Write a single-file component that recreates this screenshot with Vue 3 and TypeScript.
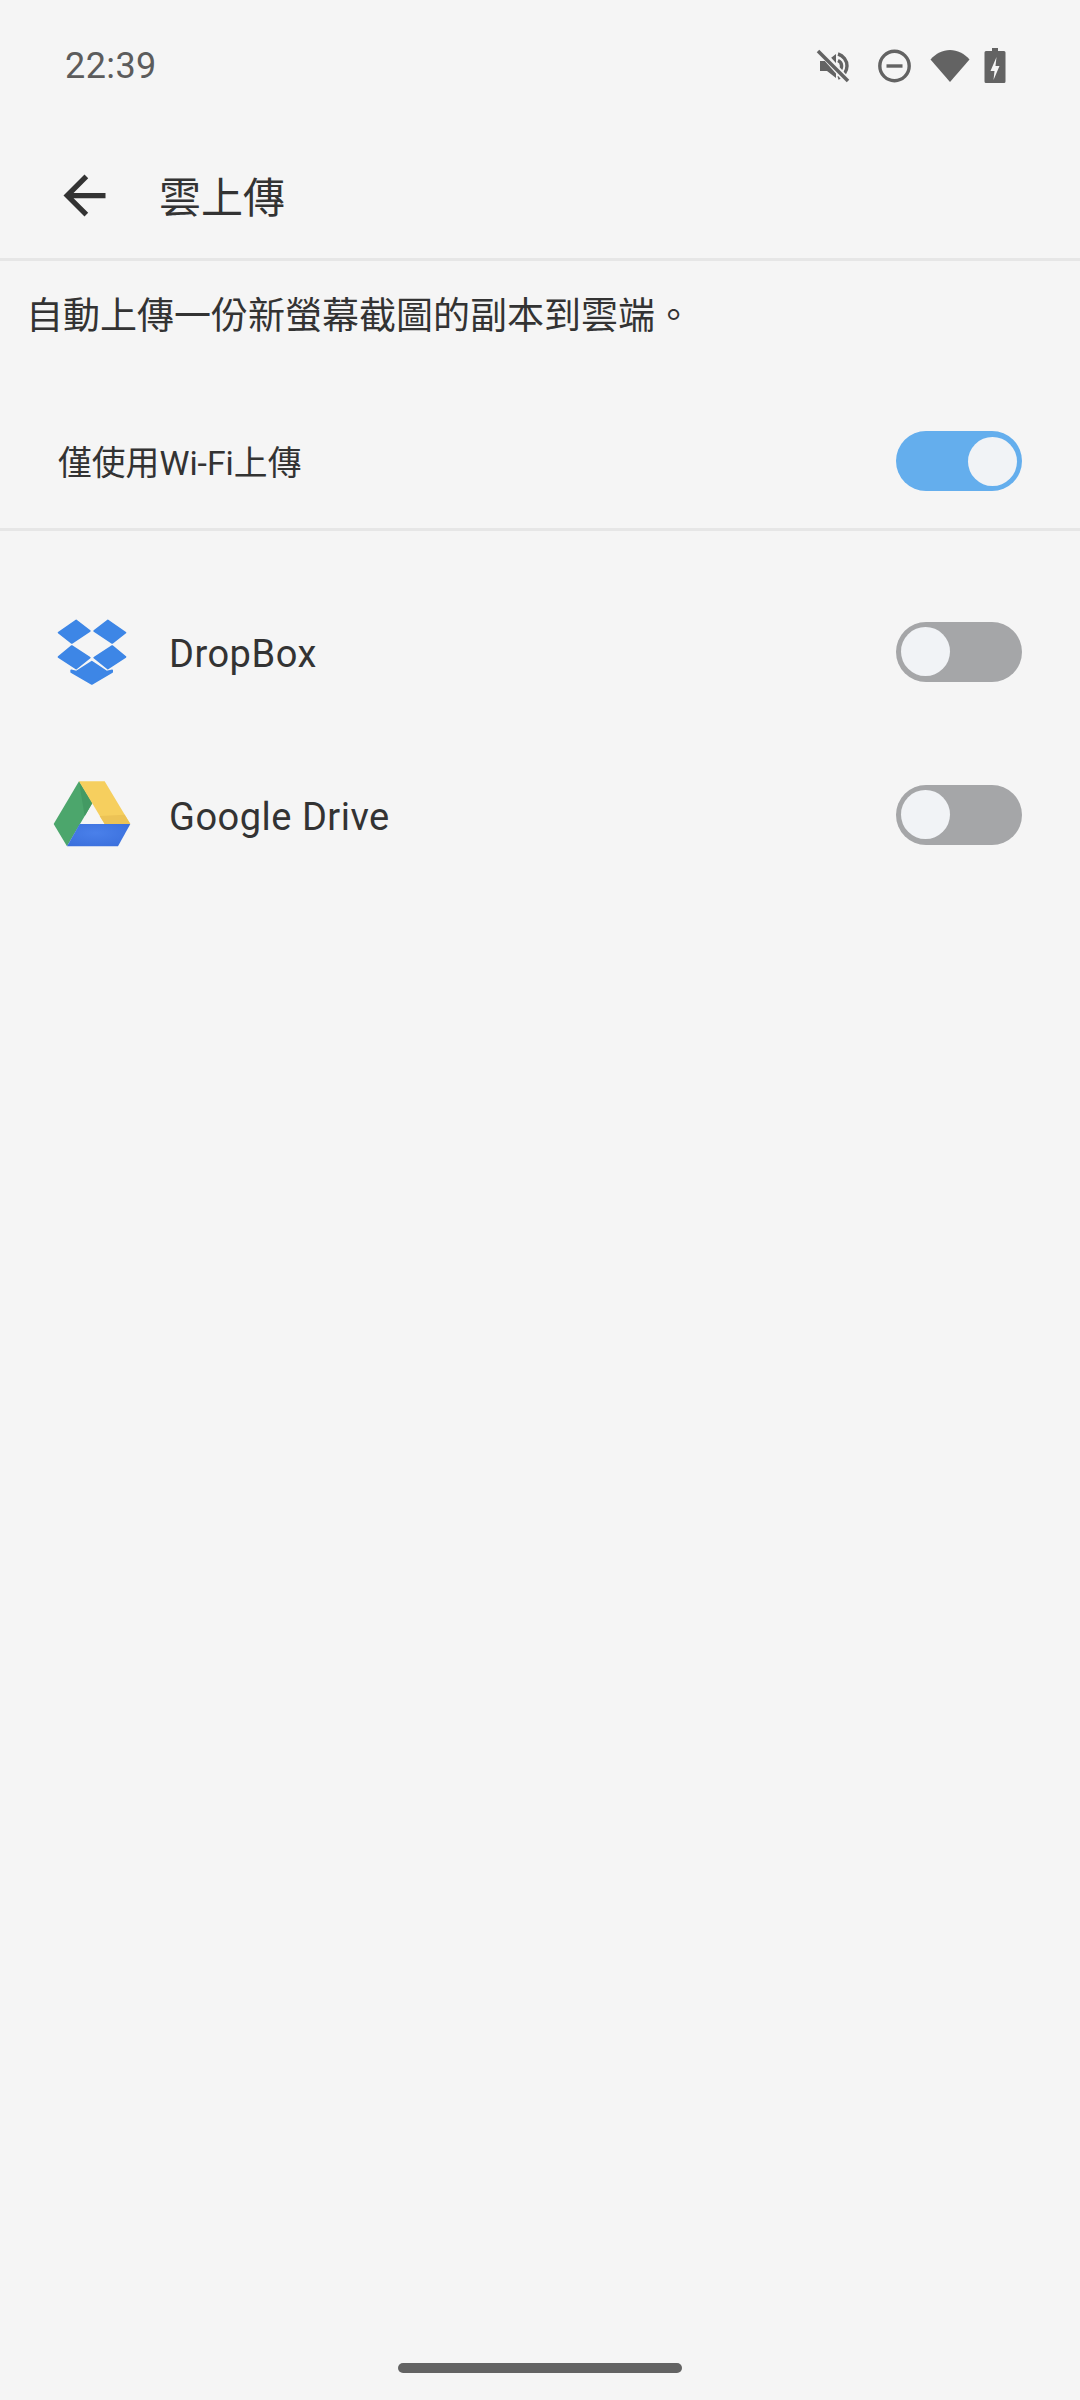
<script setup lang="ts">
import { reactive } from 'vue'

const wifiOnly = reactive({ on: true })
const providers = reactive([
  { id: 'dropbox', name: 'DropBox', on: false },
  { id: 'drive', name: 'Google Drive', on: false },
])
</script>

<template>
  <div class="page">
    <div class="status">
      <span class="time">22:39</span>
      <div class="status-icons">
        <svg class="ic-mute" width="36" height="40" viewBox="0 0 36 40">
          <path d="M5 15h7l9-7v24l-9-7H5z" fill="#636363" />
          <path d="M23 8a12.500 12.500 0 0 1 0 24M23 14.500a6 6 0 0 1 0 11" fill="none" stroke="#636363" stroke-width="3.4" />
          <path d="M2 1l32 36" stroke="#f5f5f5" stroke-width="7" />
          <path d="M3 5l30 30" stroke="#636363" stroke-width="3.600" />
        </svg>
        <svg class="ic-dnd" width="36" height="40" viewBox="0 0 36 40">
          <circle cx="17.500" cy="20" r="14.700" fill="none" stroke="#636363" stroke-width="3.400" />
          <rect x="9.500" y="18.300" width="16" height="3.400" fill="#636363" />
        </svg>
        <svg class="ic-wifi" width="42" height="40" viewBox="0 0 42 40">
          <path d="M1.500 13.500C7 7.500 13.500 4 21 4s14 3.500 19.500 9.500L21 36z" fill="#636363" />
        </svg>
        <svg class="ic-batt" width="22" height="40" viewBox="0 0 22 40">
          <path d="M8 2h6v3h6a1.500 1.500 0 0 1 1.500 1.500v29a1.500 1.500 0 0 1-1.500 1.500H2a1.500 1.500 0 0 1-1.500-1.500v-29A1.500 1.500 0 0 1 2 5h6z" fill="#636363" />
          <path d="M12.500 11l-6 14h4l-1 9 6-14h-4z" fill="#f5f5f5" />
        </svg>
      </div>
    </div>

    <header class="toolbar">
      <svg class="back" width="63" height="63" viewBox="0 0 24 24">
        <path d="M20 11H7.830l5.590-5.590L12 4l-8 8 8 8 1.410-1.410L7.830 13H20v-2z" fill="#333" />
      </svg>
      <h1 class="title">雲上傳</h1>
    </header>

    <p class="desc">自動上傳一份新螢幕截圖的副本到雲端。</p>

    <div class="wifi-row">
      <span class="wifi-label">僅使用Wi-Fi上傳</span>
      <button class="switch" :class="{ on: wifiOnly.on }" @click="wifiOnly.on = !wifiOnly.on"><span class="knob"></span></button>
    </div>

    <div class="list">
      <div v-for="p in providers" :key="p.id" class="row">
        <div class="logo" :class="p.id">
          <svg v-if="p.id === 'dropbox'" width="72" height="70" viewBox="80 50 215 210">
            <g fill="#3d86e6" stroke="#3d86e6" stroke-width="5" stroke-linejoin="round">
              <path d="M87 97 140 60 181 92 127 128z" />
              <path d="M194 92 235 60 288 97 248 128z" />
              <path d="M87 170 127 137 181 172 140 205z" />
              <path d="M194 172 248 137 288 170 235 205z" />
              <path d="M187 184 232 214 248 210V215L187 251 125 215V210L140 214z" />
            </g>
          </svg>
          <svg v-else width="78" height="68" viewBox="40 46 234 204">
            <defs>
              <radialGradient id="driveBlue" cx="0.45" cy="0.4" r="0.7">
                <stop offset="0" stop-color="#4a80ea" />
                <stop offset="1" stop-color="#3a6fdc" />
              </radialGradient>
            </defs>
            <path d="M118 50 42 178 82 245 158 115z" fill="#4ca66c" />
            <path d="M118 50 158 115 135 155z" fill="#439a63" />
            <path d="M118 50H195L272 178H195z" fill="#f6cf5e" />
            <path d="M180 154 255 150 272 178H195z" fill="#ecc356" />
            <path d="M120 178H272L235 245H82z" fill="url(#driveBlue)" />
          </svg>
        </div>
        <span class="name">{{ p.name }}</span>
        <button class="switch" :class="{ on: p.on }" @click="p.on = !p.on"><span class="knob"></span></button>
      </div>
    </div>

    <div class="home-bar"></div>
  </div>
</template>

<style>
html, body {
  background: #f5f5f5;
}
</style>

<style scoped>
.page {
  display: flex;
  flex-direction: column;
  min-height: 2400px;
  background: #f5f5f5;
  color: #333;
  font-family: Roboto, "Noto Sans CJK TC", sans-serif;
}

.status {
  display: flex;
  align-items: center;
  justify-content: space-between;
  height: 132px;
  padding: 0 74px 0 65px;
}

.time {
  font-size: 36px;
  letter-spacing: 0.4px;
  color: #5c5c5c;
}

.status-icons {
  display: flex;
  align-items: center;
}

.ic-dnd {
  margin-left: 26px;
}

.ic-wifi {
  margin-left: 16px;
}

.ic-batt {
  margin-left: 13px;
}

.toolbar {
  display: flex;
  align-items: center;
  height: 126px;
  padding-left: 53px;
  border-bottom: 3px solid #e6e6e6;
}

.title {
  margin: 0 0 2px 43px;
  font-size: 42px;
  font-weight: 400;
}

.desc {
  height: 108px;
  margin: 0;
  padding-left: 26px;
  font-size: 37px;
  line-height: 112px;
}

.wifi-row {
  display: flex;
  align-items: center;
  justify-content: space-between;
  height: 134px;
  padding: 25px 58px 0;
  border-bottom: 3px solid #e6e6e6;
}

.wifi-label {
  margin-bottom: 2px;
  font-size: 33.8px;
}

.list {
  padding-top: 39px;
}

.row {
  display: flex;
  align-items: center;
  height: 163px;
  padding-right: 58px;
}

.logo {
  display: flex;
  justify-content: center;
  width: 78px;
  margin-left: 53px;
}

.logo.drive {
  margin-bottom: 2px;
}

.name {
  flex: 1;
  margin-left: 38px;
  padding-top: 4px;
  font-size: 38px;
  letter-spacing: 0.5px;
}

.switch {
  display: flex;
  justify-content: flex-start;
  align-items: center;
  width: 126px;
  height: 60px;
  padding: 0 5px;
  border: 0;
  border-radius: 30px;
  background: #a5a6a8;
}

.switch.on {
  justify-content: flex-end;
  background: #64aeed;
}

.knob {
  width: 49px;
  height: 49px;
  border-radius: 50%;
  background: #f1f3f6;
}

.home-bar {
  align-self: center;
  width: 284px;
  height: 10px;
  margin-top: auto;
  margin-bottom: 27px;
  border-radius: 5px;
  background: #636363;
}
</style>
